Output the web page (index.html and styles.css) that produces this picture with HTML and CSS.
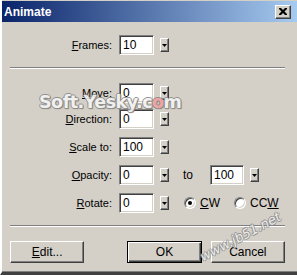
FILE: index.html
```html
<!DOCTYPE html>
<html>
<head>
<meta charset="utf-8">
<link rel="stylesheet" href="styles.css">
</head>
<body>
<div class="window">
  <div class="titlebar">
    <span class="title">Animate</span>
    <span class="close"><svg width="8" height="7" viewBox="0 0 8 7"><path d="M0 0h2l2 2 2-2h2v1l-2.5 2.5 2.5 2.5v1h-2l-2-2-2 2h-2v-1l2.5-2.5-2.5-2.5z" fill="#000"/></svg></span>
  </div>
  <div class="content">
    <div class="row">
      <span class="lbl"><u>F</u>rames:</span>
      <span class="input">10</span><span class="drop"><svg width="5" height="3" viewBox="0 0 5 3"><path d="M0 0h5l-2.5 3z" fill="#000"/></svg></span>
    </div>
    <div class="sep"></div>
    <div class="group">
      <div class="row">
        <span class="lbl"><u>M</u>ove:</span>
        <span class="input">0</span><span class="drop"><svg width="5" height="3" viewBox="0 0 5 3"><path d="M0 0h5l-2.5 3z" fill="#000"/></svg></span>
      </div>
      <div class="row tight">
        <span class="lbl"><u>D</u>irection:</span>
        <span class="input">0</span><span class="drop"><svg width="5" height="3" viewBox="0 0 5 3"><path d="M0 0h5l-2.5 3z" fill="#000"/></svg></span>
      </div>
      <div class="row">
        <span class="lbl"><u>S</u>cale to:</span>
        <span class="input">100</span><span class="drop"><svg width="5" height="3" viewBox="0 0 5 3"><path d="M0 0h5l-2.5 3z" fill="#000"/></svg></span>
      </div>
      <div class="row">
        <span class="lbl"><u>O</u>pacity:</span>
        <span class="input">0</span><span class="drop"><svg width="5" height="3" viewBox="0 0 5 3"><path d="M0 0h5l-2.5 3z" fill="#000"/></svg></span>
        <span class="to">to</span>
        <span class="input short">100</span><span class="drop"><svg width="5" height="3" viewBox="0 0 5 3"><path d="M0 0h5l-2.5 3z" fill="#000"/></svg></span>
      </div>
      <div class="row">
        <span class="lbl"><u>R</u>otate:</span>
        <span class="input">0</span><span class="drop"><svg width="5" height="3" viewBox="0 0 5 3"><path d="M0 0h5l-2.5 3z" fill="#000"/></svg></span>
        <span class="radio first"><span class="dot"></span></span><span class="rlbl"><u>C</u>W</span>
        <span class="radio"></span><span class="rlbl">CC<u>W</u></span>
      </div>
    </div>
    <div class="sep"></div>
    <div class="buttons">
      <span class="btn"><u>E</u>dit...</span>
      <span class="btn default">OK</span>
      <span class="btn">Cancel</span>
    </div>
  </div>
  <div class="wm1">Soft.Yesky.c<span class="wmo">o</span>m</div>
  <div class="wm2">www.jb51.net</div>
</div>
</body>
</html>
```

FILE: styles.css
```css
* { box-sizing: border-box; }
html, body { margin: 0; padding: 0; }
body { background: #d4d0c8; }

.window {
  position: relative;
  width: 297px;
  height: 275px;
  background: #d4d0c8;
  border-left: 2px solid #fff;
  border-bottom: 3px solid #404040;
  box-shadow: inset 0 -1px 0 #808080;
  font-family: "Liberation Sans", Arial, sans-serif;
  font-size: 11px;
  color: #000;
  overflow: hidden;
}

.titlebar {
  height: 21px;
  margin-top: 1px;
  background: linear-gradient(to right, #0a246a, #a6caf0);
  display: flex;
  align-items: center;
  justify-content: space-between;
  padding: 0 6px 0 2px;
}
.title {
  color: #fff;
  font-weight: bold;
  font-size: 12px;
}
.close {
  width: 16px;
  height: 14px;
  background: #d4d0c8;
  border-top: 1px solid #fff;
  border-left: 1px solid #fff;
  border-right: 1px solid #404040;
  border-bottom: 1px solid #404040;
  box-shadow: inset -1px -1px 0 #808080;
  display: flex;
  align-items: center;
  justify-content: center;
  padding-bottom: 1px;
}

.content {
  padding: 13px 12px 0 6px;
}

.row {
  display: flex;
  align-items: center;
  height: 20px;
}
.group .row + .row { margin-top: 8px; }
.group .row.tight { margin-top: 6px; }

.lbl {
  width: 104px;
  text-align: right;
  margin-right: 7px;
}

.input {
  width: 35px;
  height: 20px;
  background: #fff;
  border-top: 1px solid #808080;
  border-left: 1px solid #808080;
  border-right: 1px solid #fff;
  border-bottom: 1px solid #fff;
  box-shadow: inset 1px 1px 0 #404040, inset -1px -1px 0 #d4d0c8;
  padding: 1px 0 0 3px;
  line-height: 17px;
  font-size: 12px;
}
.input.short { width: 34px; }

.drop {
  width: 9px;
  height: 14px;
  margin-left: 6px;
  background: #d4d0c8;
  border-top: 1px solid #fff;
  border-left: 1px solid #fff;
  border-right: 1px solid #404040;
  border-bottom: 1px solid #404040;
  box-shadow: inset -1px -1px 0 #808080;
  display: flex;
  align-items: center;
  justify-content: center;
}
.drop svg { display: block; margin-left: -1px; }

.to { margin: 0 17px 0 14px; font-size: 12px; }

.radio {
  width: 12px;
  height: 12px;
  border-radius: 50%;
  background: #fff;
  border: 1px solid;
  border-color: #808080 #fff #fff #808080;
  box-shadow: inset 1px 1px 0 #404040, inset -1px -1px 0 #d4d0c8;
  display: flex;
  align-items: center;
  justify-content: center;
  margin-left: 14px;
}
.radio.first { margin-left: 15px; }
.dot { width: 4px; height: 4px; border-radius: 50%; background: #000; }
.rlbl { margin-left: 4px; font-size: 12px; }

.sep {
  height: 2px;
  border-top: 1px solid #808080;
  border-bottom: 1px solid #fff;
  margin: 12px 0 14px 2px;
}

.buttons {
  display: flex;
  padding-left: 2px;
}
.btn {
  width: 75px;
  height: 22px;
  display: flex;
  align-items: center;
  justify-content: center;
  background: #d4d0c8;
  border-top: 1px solid #fff;
  border-left: 1px solid #fff;
  border-right: 1px solid #404040;
  border-bottom: 1px solid #404040;
  box-shadow: inset -1px -1px 0 #808080;
  font-size: 12px;
}
.btn.default {
  margin-left: 43px;
  border: 1px solid #000;
  box-shadow: inset 1px 1px 0 #fff, inset -1px -1px 0 #404040, inset -2px -2px 0 #808080;
}
.btn + .btn:last-child { margin-left: 9px; }

.wm1 {
  position: absolute;
  left: 37px;
  top: 92px;
  font-family: "DejaVu Sans", sans-serif;
  font-weight: bold;
  font-size: 17.5px;
  color: #f4f4f4;
  letter-spacing: -0.5px;
  text-shadow: 1px 0 0 #8a8a8a, -1px 0 0 #8a8a8a, 0 1px 0 #8a8a8a, 0 -1px 0 #8a8a8a, 1px 1px 1px #666;
  opacity: 0.9;
}
.wmo { color: #f3a0a0; }

.wm2 {
  position: absolute;
  left: 199px;
  top: 250px;
  font-family: "DejaVu Sans", sans-serif;
  font-style: italic;
  font-size: 13px;
  color: #f2f2f2;
  text-shadow: 1px 0 0 #888, -1px 0 0 #888, 0 1px 0 #888, 0 -1px 0 #888;
  transform: rotate(-28deg);
  transform-origin: left center;
  opacity: 0.85;
}
```
